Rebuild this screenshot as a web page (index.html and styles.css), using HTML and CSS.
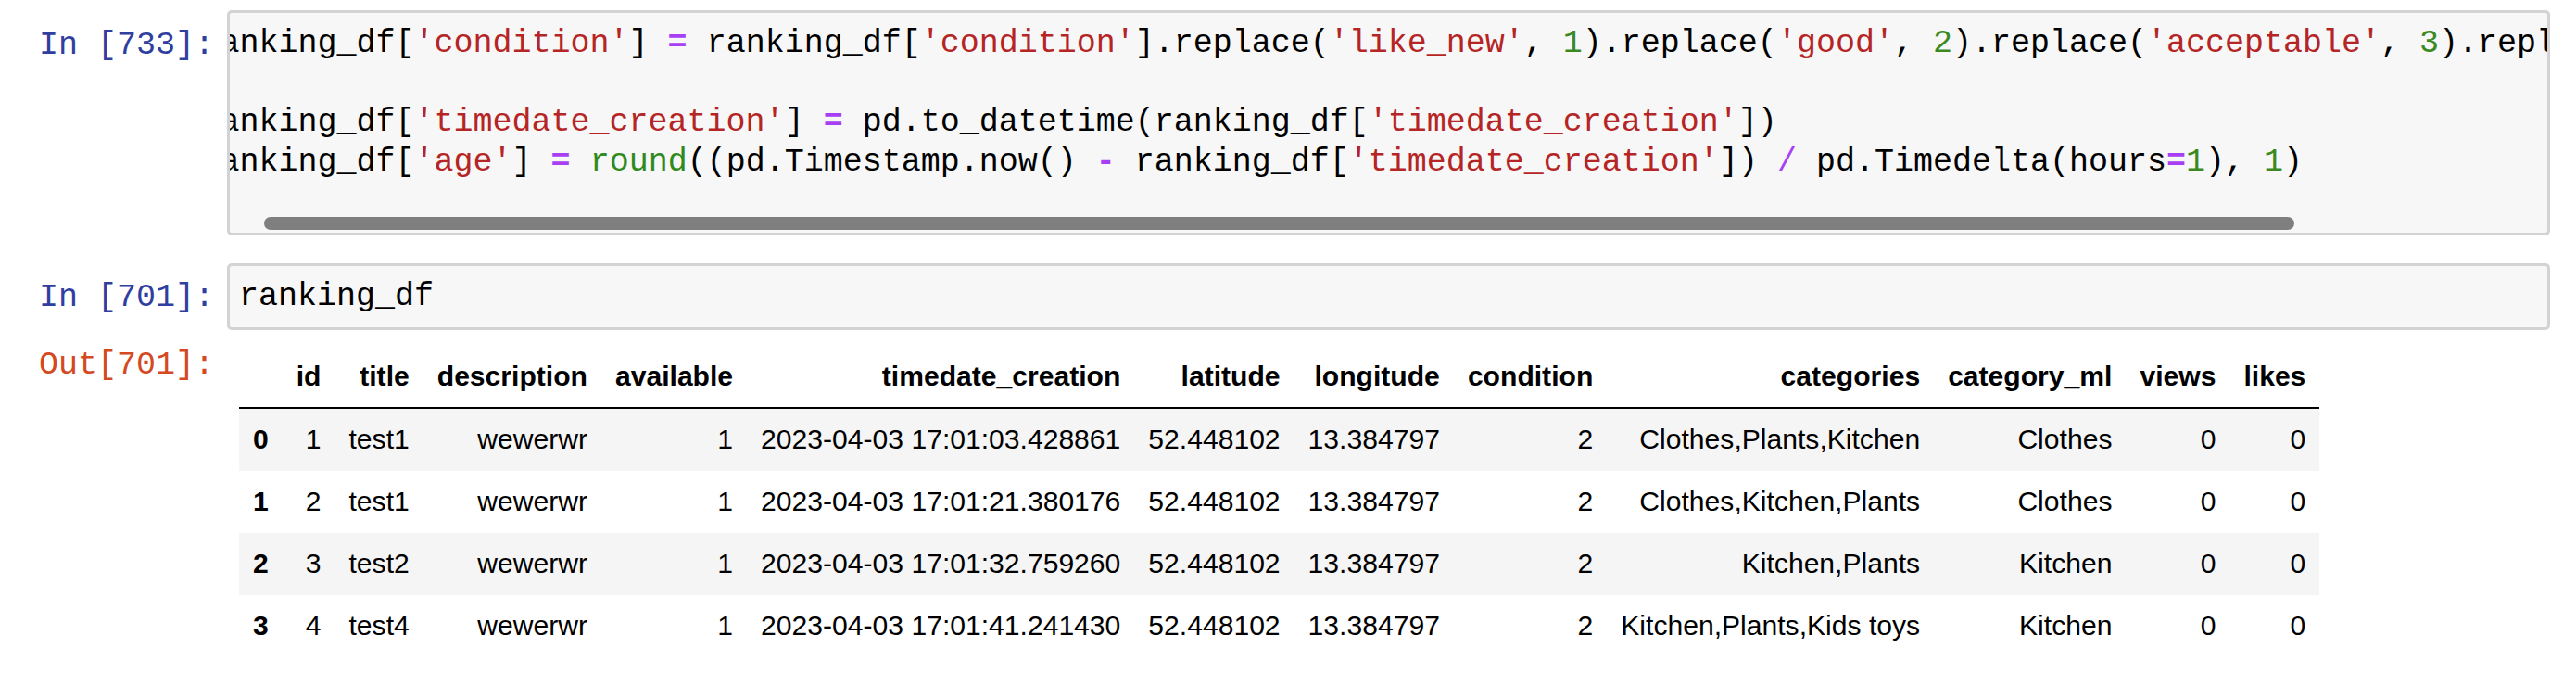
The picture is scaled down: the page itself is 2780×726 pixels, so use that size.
FILE: index.html
```html
<!DOCTYPE html>
<html lang="en">
<head>
<meta charset="utf-8">
<title>ranking_df</title>
<link rel="stylesheet" href="styles.css">
</head>
<body>
<div class="notebook">
  <div class="cell">
    <div class="row">
      <div class="prompt prompt-in">In&nbsp;[733]:</div>
      <div class="input-area">
        <div class="code code-scrolled">
          <div class="line">ranking_df[<span class="s">'condition'</span>] <span class="o">=</span> ranking_df[<span class="s">'condition'</span>].replace(<span class="s">'like_new'</span>, <span class="n">1</span>).replace(<span class="s">'good'</span>, <span class="n">2</span>).replace(<span class="s">'acceptable'</span>, <span class="n">3</span>).repl</div>
          <div class="line"></div>
          <div class="line">ranking_df[<span class="s">'timedate_creation'</span>] <span class="o">=</span> pd.to_datetime(ranking_df[<span class="s">'timedate_creation'</span>])</div>
          <div class="line">ranking_df[<span class="s">'age'</span>] <span class="o">=</span> <span class="b">round</span>((pd.Timestamp.now() <span class="o">-</span> ranking_df[<span class="s">'timedate_creation'</span>]) <span class="o slash">/</span> pd.Timedelta(hours<span class="o">=</span><span class="n">1</span>), <span class="n">1</span>)</div>
          <div class="line"></div>
        </div>
        <div class="scroll-thumb"></div>
      </div>
    </div>
  </div>
  <div class="cell">
    <div class="row">
      <div class="prompt prompt-in">In&nbsp;[701]:</div>
      <div class="input-area">
        <div class="code">
          <div class="line">ranking_df</div>
        </div>
      </div>
    </div>
    <div class="row">
      <div class="prompt prompt-out">Out[701]:</div>
      <div class="output-sub">
        <table class="dataframe">
          <thead>
            <tr>
              <th></th><th>id</th><th>title</th><th>description</th><th>available</th><th>timedate_creation</th><th>latitude</th><th>longitude</th><th>condition</th><th>categories</th><th>category_ml</th><th>views</th><th>likes</th>
            </tr>
          </thead>
          <tbody>
            <tr>
              <th>0</th><td>1</td><td>test1</td><td>wewerwr</td><td>1</td><td>2023-04-03 17:01:03.428861</td><td>52.448102</td><td>13.384797</td><td>2</td><td>Clothes,Plants,Kitchen</td><td>Clothes</td><td>0</td><td>0</td>
            </tr>
            <tr>
              <th>1</th><td>2</td><td>test1</td><td>wewerwr</td><td>1</td><td>2023-04-03 17:01:21.380176</td><td>52.448102</td><td>13.384797</td><td>2</td><td>Clothes,Kitchen,Plants</td><td>Clothes</td><td>0</td><td>0</td>
            </tr>
            <tr>
              <th>2</th><td>3</td><td>test2</td><td>wewerwr</td><td>1</td><td>2023-04-03 17:01:32.759260</td><td>52.448102</td><td>13.384797</td><td>2</td><td>Kitchen,Plants</td><td>Kitchen</td><td>0</td><td>0</td>
            </tr>
            <tr>
              <th>3</th><td>4</td><td>test4</td><td>wewerwr</td><td>1</td><td>2023-04-03 17:01:41.241430</td><td>52.448102</td><td>13.384797</td><td>2</td><td>Kitchen,Plants,Kids toys</td><td>Kitchen</td><td>0</td><td>0</td>
            </tr>
          </tbody>
        </table>
      </div>
    </div>
  </div>
</div>
</body>
</html>
```

FILE: styles.css
```css
* {
  box-sizing: border-box;
}

html,
body {
  margin: 0;
  padding: 0;
  background: #ffffff;
}

body {
  width: 2780px;
  height: 726px;
  overflow: hidden;
}

.notebook {
  padding: 0 28px 0 0;
}

.cell {
  padding: 15px 0;
}

.cell:first-child {
  padding-top: 11px;
}

.row {
  display: flex;
  align-items: flex-start;
}

.prompt {
  flex: 0 0 245px;
  padding: 16.5px 14px 0 0;
  text-align: right;
  font-family: "Liberation Mono", "Courier New", monospace;
  font-size: 35px;
  line-height: 42.5px;
  white-space: pre;
}

.prompt-in {
  color: #303f9f;
}

.prompt-out {
  color: #d4491f;
}

.input-area {
  flex: 1 1 auto;
  min-width: 0;
  position: relative;
  overflow: hidden;
  background: #f7f7f7;
  border: 3px solid #d3d3d3;
  border-radius: 5px;
  padding: 12px 0;
}

.code {
  font-family: "Liberation Mono", "Courier New", monospace;
  font-size: 35px;
  line-height: 42.5px;
  color: #000000;
  padding: 0 10px;
}

.code-scrolled {
  margin-left: -41.5px;
}

.line {
  white-space: pre;
  min-height: 42.5px;
}

.s {
  color: #b52525;
}

.n {
  color: #3a8a1f;
}

.b {
  color: #2f8a1c;
}

.o {
  color: #a83ff5;
  font-weight: bold;
}

.slash {
  font-weight: normal;
}

.scroll-thumb {
  position: absolute;
  left: 37px;
  bottom: 2.5px;
  width: 2191px;
  height: 14px;
  border-radius: 7px;
  background: #7f7f7f;
}

.output-sub {
  flex: 1 1 auto;
  min-width: 0;
  padding: 16.5px 0 0 13px;
}

.dataframe {
  border-collapse: collapse;
  border: none;
  font-family: "Liberation Sans", Arial, Helvetica, sans-serif;
  font-size: 30.1px;
  color: #000000;
}

.dataframe th,
.dataframe td {
  padding: 15px;
  line-height: 36.8px;
  text-align: right;
  vertical-align: middle;
  white-space: nowrap;
  border: none;
}

.dataframe th {
  font-weight: bold;
}

.dataframe thead th {
  vertical-align: bottom;
  border-bottom: 2px solid #000000;
}

.dataframe tbody tr:nth-child(odd) {
  background: #f5f5f5;
}
```
